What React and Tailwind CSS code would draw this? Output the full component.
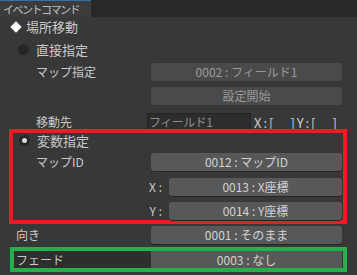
import React from "react";

const font = { fontFamily: '"Noto Sans CJK JP", "Noto Sans", sans-serif' };

function Btn({ children, dim, className = "" }) {
  return (
    <div
      className={`h-[18px] rounded-[3px] flex items-center justify-center text-[12px] leading-none ${
        dim ? "bg-[#4a4a4a] text-[#9a9a9a]" : "bg-[#585858] text-[#d2d2d2] shadow-[0_1px_0_#262626]"
      } ${className}`}
    >
      {children}
    </div>
  );
}

export default function App() {
  return (
    <div className="w-[357px] h-[275px] bg-[#383838] overflow-hidden flex flex-col" style={font}>
      <div className="h-[17px] bg-[#282828] flex shrink-0">
        <div className="w-[91px] h-full bg-[#3c3c3c] border-t border-[#3b6fa8] flex items-center pl-[3px] text-[11px] tracking-[-1.5px] text-[#c0c0c0] leading-none">
          イベントコマンド
        </div>
      </div>
      <div className="flex flex-col text-[12px] text-[#c8c8c8] leading-none">
        <div className="h-[19px] flex items-center pl-[11px] gap-[5px] text-[13px]">
          <span className="w-[8px] h-[8px] bg-white rotate-45 ml-[1px] mr-[1px]" />
          <span>場所移動</span>
        </div>
        <div className="h-[18px] mt-[4px] flex items-center pl-[18px] gap-[7px] text-[13px]">
          <span className="w-[11px] h-[11px] rounded-full bg-[#262626]" />
          <span>直接指定</span>
        </div>
        <div className="h-[18px] mt-[5px] flex items-center pl-[36px] pr-[15px]">
          <span className="flex-1">マップ指定</span>
          <Btn dim className="w-[191px]">0002 : フィールド1</Btn>
        </div>
        <div className="h-[18px] mt-[6px] flex justify-end pr-[15px]">
          <Btn dim className="w-[191px] text-[#8a8a8a]">設定開始</Btn>
        </div>
        <div className="h-[18px] mt-[8px] flex items-center pl-[36px]">
          <span className="w-[111px]">移動先</span>
          <div className="w-[104px] h-[18px] bg-[#2d2d2d] border border-[#242424] text-[#8f8f8f] flex items-center pl-[1px] text-[12px] tracking-[-0.5px]">
            フィールド1
          </div>
          <span className="ml-[3px] text-[13px] tracking-[2px] text-[#d0d0d0] whitespace-pre">X:[　]Y:[　]</span>
        </div>
        <div className="ml-[9px] w-[338px] h-[95px] -mt-[2px] border-4 border-[#ed1c24] flex flex-col">
          <div className="h-[14px] flex items-center pl-[6px] gap-[7px] text-[13px]">
            <span className="w-[11px] h-[11px] rounded-full bg-[#262626] flex items-center justify-center">
              <span className="w-[5px] h-[5px] rounded-full bg-[#d8d8d8]" />
            </span>
            <span>変数指定</span>
          </div>
          <div className="h-[18px] mt-[6px] flex items-center pl-[23px] pr-[1px]">
            <span className="flex-1">マップID</span>
            <Btn className="w-[191px]">0012 : マップID</Btn>
          </div>
          <div className="h-[18px] mt-[7px] flex items-center justify-end pr-[1px] gap-[7px]">
            <span>X :</span>
            <Btn className="w-[173px]">0013 : X座標</Btn>
          </div>
          <div className="h-[18px] mt-[6px] flex items-center justify-end pr-[1px] gap-[7px]">
            <span>Y :</span>
            <Btn className="w-[173px]">0014 : Y座標</Btn>
          </div>
        </div>
        <div className="h-[18px] mt-[2px] flex items-center pl-[16px] pr-[15px]">
          <span className="flex-1">向き</span>
          <Btn className="w-[191px]">0001 : そのまま</Btn>
        </div>
        <div className="ml-[10px] w-[337px] h-[25px] mt-[3px] border-4 border-[#22b14c] flex">
          <div className="w-[137px] bg-[#2e2e2e] flex items-center pl-[2px]">フェード</div>
          <div className="w-[191px] bg-[#585858] flex items-center justify-center text-[#d2d2d2]">0003 : なし</div>
        </div>
      </div>
    </div>
  );
}
